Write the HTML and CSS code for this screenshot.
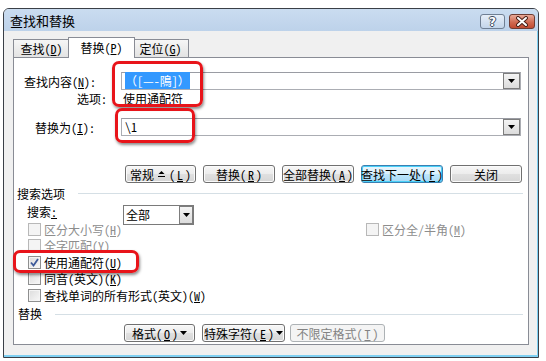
FILE: index.html
```html
<!DOCTYPE html>
<html>
<head>
    <meta charset="UTF-8">
    <title>查找和替换</title>
    <link rel="stylesheet" href="styles.css">
</head>
<body>
<div class="screen">
    <div class="window">
        <div class="titlebar">
            <span class="title">查找和替换</span>
            <span class="tbtn help">?</span>
            <span class="tbtn close">
                <svg width="14" height="11" viewBox="0 0 14 11">
                    <path d="M3 2 L11 9 M11 2 L3 9" stroke="#4a2018" stroke-width="4" stroke-linecap="round"/>
                    <path d="M3 2 L11 9 M11 2 L3 9" stroke="#fff" stroke-width="2" stroke-linecap="round"/>
                </svg>
            </span>
        </div>
        <div class="frame">
            <div class="tabs">
                <span class="tab">查找(<u>D</u>)</span>
                <span class="tab active">替换(<u>P</u>)</span>
                <span class="tab">定位(<u>G</u>)</span>
            </div>
            <div class="panel">
                <div class="row find-row">
                    <span class="lbl lbl-find">查找内容(<u>N</u>):</span>
                    <div class="combo">
                        <span class="combo-text"><span class="sel">（[—-隝]）</span></span>
                        <span class="drop"><svg width="7" height="4" viewBox="0 0 7 4"><polygon points="0,0 7,0 3.5,4" fill="#000"/></svg></span>
                    </div>
                </div>
                <div class="row opt-row">
                    <span class="lbl lbl-opt">选项:</span>
                    <span class="opt-val">使用通配符</span>
                </div>
                <div class="row repl-row">
                    <span class="lbl lbl-repl">替换为(<u>I</u>):</span>
                    <div class="combo">
                        <span class="combo-text">\1</span>
                        <span class="drop"><svg width="7" height="4" viewBox="0 0 7 4"><polygon points="0,0 7,0 3.5,4" fill="#000"/></svg></span>
                    </div>
                </div>
                <div class="row btn-row">
                    <span class="btn w71">常规 <svg class="up" width="7" height="8" viewBox="0 0 7 8"><polygon points="0.5,4 3.5,1 6.5,4" fill="#000"/><rect x="0" y="6" width="7" height="1" fill="#000"/></svg> (<u>L</u>)</span>
                    <span class="btn w72">替换(<u>R</u>)</span>
                    <span class="btn w72">全部替换(<u>A</u>)</span>
                    <span class="btn focus w82">查找下一处(<u>F</u>)</span>
                    <span class="btn w72">关闭</span>
                </div>
                <div class="row section">
                    <span class="sec-title">搜索选项</span>
                    <span class="sec-line"></span>
                </div>
                <div class="row search-row">
                    <span class="lbl lbl-search">搜索<u>:</u></span>
                    <div class="select">
                        <span class="combo-text">全部</span>
                        <span class="drop"><svg width="7" height="4" viewBox="0 0 7 4"><polygon points="0,0 7,0 3.5,4" fill="#000"/></svg></span>
                    </div>
                </div>
                <div class="checks">
                    <div class="row chk-row">
                        <span class="chk wide off"><span class="box"></span>区分大小写(<u>H</u>)</span>
                        <span class="chk off"><span class="box"></span>区分全/半角(<u>M</u>)</span>
                    </div>
                    <div class="row chk-row">
                        <span class="chk off"><span class="box"></span>全字匹配(<u>Y</u>)</span>
                    </div>
                    <div class="row chk-row">
                        <span class="chk"><span class="box"><svg width="9" height="9" viewBox="0 0 9 9"><path d="M1 4.5 L3.5 7.5 L8 1" stroke="#3d5a9a" stroke-width="1.8" fill="none"/></svg></span>使用通配符(<u>U</u>)</span>
                    </div>
                    <div class="row chk-row">
                        <span class="chk"><span class="box"></span>同音(英文)(<u>K</u>)</span>
                    </div>
                    <div class="row chk-row">
                        <span class="chk"><span class="box"></span>查找单词的所有形式(英文)(<u>W</u>)</span>
                    </div>
                </div>
                <div class="row section">
                    <span class="sec-title sec-repl">替换</span>
                    <span class="sec-line"></span>
                </div>
                <div class="row btn-row2">
                    <span class="btn w71">格式(<u>O</u>) <svg width="7" height="4" viewBox="0 0 7 4"><polygon points="0,0 7,0 3.5,4" fill="#000"/></svg></span>
                    <span class="btn w83">特殊字符(<u>E</u>) <svg width="7" height="4" viewBox="0 0 7 4"><polygon points="0,0 7,0 3.5,4" fill="#000"/></svg></span>
                    <span class="btn disabled w95">不限定格式(<u>T</u>)</span>
                </div>
            </div>
        </div>
    </div>

    <div class="mark mark1"></div>
    <div class="mark mark2"></div>
    <div class="mark mark3"></div>
</div>
</body>
</html>
```

FILE: styles.css
```css
body {
    margin: 0;
    background: #fff;
    font-family: "Noto Sans Mono CJK SC", "Noto Sans CJK SC", "DejaVu Sans Mono", monospace;
    font-size: 12px;
    color: #000;
}

.screen {
    position: relative;
    width: 546px;
    height: 361px;
    overflow: hidden;
}

.window {
    margin: 8px 0 0 3px;
    width: 536px;
    height: 350px;
    box-sizing: border-box;
    border: 1px solid #3a3f47;
    border-radius: 6px 6px 0 0;
    background: #f0f0f0;
    box-shadow: inset -1px -2px 0 #7fd0f2;
    overflow: hidden;
}

.titlebar {
    height: 22px;
    display: flex;
    align-items: flex-start;
    background: linear-gradient(#cadcf0, #bdd2ea);
}

.title {
    flex: 1;
    padding-left: 6px;
    line-height: 24px;
    font-family: "Noto Sans CJK SC", sans-serif;
    font-size: 13px;
}

.tbtn {
    margin-top: 5px;
    height: 15px;
    box-sizing: border-box;
    border-radius: 3px;
    display: flex;
    align-items: center;
    justify-content: center;
}

.help {
    width: 25px;
    margin-right: 4px;
    border: 1px solid #6f7f93;
    background: linear-gradient(#e6eef8, #c3d5ea);
    color: #fff;
    font-family: "DejaVu Sans", sans-serif;
    font-weight: bold;
    font-size: 12px;
    text-shadow: 1px 0 0 #3b4a5c, -1px 0 0 #3b4a5c, 0 1px 0 #3b4a5c, 0 -1px 0 #3b4a5c;
}

.close {
    width: 26px;
    margin-right: 3px;
    border: 1px solid #6e3c33;
    background: linear-gradient(#e9aa98, #d06a52 55%, #c24a31);
}

.frame {
    padding: 6px 9px 0 9px;
}

.tabs {
    display: flex;
    height: 20px;
    align-items: flex-end;
}

.tab {
    height: 18px;
    box-sizing: border-box;
    border: 1px solid #898c95;
    border-bottom: none;
    background: linear-gradient(#f6f6f6, #e3e3e3);
    text-align: center;
    line-height: 17px;
}

.tab:nth-child(1) {
    width: 57px;
}

.tab:nth-child(3) {
    width: 56px;
    border-left: none;
}

.tab.active {
    position: relative;
    z-index: 2;
    width: 67px;
    height: 21px;
    margin: 0 -2px -1px -2px;
    background: #fff;
    line-height: 19px;
}

.panel {
    position: relative;
    height: 288px;
    box-sizing: border-box;
    border: 1px solid #898c95;
    background: #fff;
}

.row {
    display: flex;
    align-items: center;
}

.lbl {
    flex: none;
    width: 107px;
    box-sizing: border-box;
    white-space: nowrap;
}

.lbl-find { padding-left: 10px; }
.lbl-opt { padding-left: 63px; }
.lbl-repl { padding-left: 21px; }
.lbl-search { padding-left: 13px; width: 109px; }

.find-row {
    margin-top: 14px;
    height: 18px;
}

.opt-row {
    height: 16px;
}

.opt-val {
    margin-left: 2px;
}

.repl-row {
    margin-top: 12px;
    height: 18px;
}

.combo {
    width: 400px;
    height: 18px;
    box-sizing: border-box;
    border: 1px solid #abadb3;
    border-top-color: #9a9ca3;
    display: flex;
}

.combo-text {
    flex: 1;
    padding-left: 3px;
    line-height: 16px;
    white-space: nowrap;
}

.sel {
    background: #3399ff;
    color: #fff;
}

.drop {
    width: 17px;
    height: 16px;
    box-sizing: border-box;
    border: 1px solid #7d7d7d;
    background: linear-gradient(#f4f4f4, #dcdcdc);
    display: flex;
    align-items: center;
    justify-content: center;
}

.btn-row {
    margin-top: 29px;
    height: 18px;
    padding-left: 111px;
    gap: 7px;
}

.btn {
    height: 18px;
    box-sizing: border-box;
    border: 1px solid #707070;
    border-radius: 3px;
    background: linear-gradient(#f7f7f7, #ececec 50%, #e0e0e0 51%, #d6d6d6);
    box-shadow: inset 0 0 0 1px #fbfbfb;
    display: flex;
    align-items: center;
    justify-content: center;
    gap: 2px;
    white-space: nowrap;
}

.btn .up {
    margin: 0 2px;
}

.btn.focus {
    border-color: #3c7fb1;
    background: linear-gradient(#eaf6fd, #d9f0fc 50%, #bee6fd 51%, #a7d9f5);
    box-shadow: inset 0 0 0 1px #48d0f8;
}

.btn.disabled {
    border-color: #adb2b5;
    background: #f4f4f4;
    box-shadow: none;
    color: #838383;
}

.w71 { width: 71px; }
.w72 { width: 72px; }
.w82 { width: 82px; }
.w83 { width: 83px; }
.w95 { width: 95px; }

.section {
    height: 16px;
    margin-top: 2px;
}

.sec-title {
    padding-left: 3px;
}

.sec-repl {
    padding-left: 4px;
}

.sec-line {
    flex: 1;
    height: 1px;
    background: #d5dfe5;
    margin: 1px 5px 0 13px;
}

.search-row {
    margin-top: 4px;
    height: 20px;
    align-items: flex-start;
}

.lbl-search {
    margin-top: -1px;
    line-height: 16px;
}

.select {
    width: 71px;
    height: 20px;
    box-sizing: border-box;
    border: 1px solid #7a7a7a;
    display: flex;
    align-items: center;
}

.select .combo-text {
    padding-left: 2px;
}

.select .drop {
    width: 14px;
    height: 18px;
}

.checks {
    margin-top: -4px;
}

.chk-row {
    height: 16.5px;
    padding-left: 14px;
}

.chk {
    display: flex;
    align-items: center;
    white-space: nowrap;
}

.chk.wide {
    width: 338px;
}

.box {
    width: 13px;
    height: 13px;
    box-sizing: border-box;
    margin-right: 3px;
    border: 1px solid #8e8f8f;
    background: linear-gradient(135deg, #dcdcdc, #f8f8f8);
    box-shadow: inset 0 0 0 1px #f4f4f4;
    display: flex;
    align-items: center;
    justify-content: center;
}

.chk.off {
    color: #8d8d8d;
}

.chk.off .box {
    border-color: #b8b8b8;
    background: #f4f4f4;
}

.btn-row2 {
    margin-top: 2.5px;
    height: 18px;
    padding-left: 110px;
}

.btn-row2 .w71 { margin-right: 7px; }
.btn-row2 .w83 { margin-right: 5px; }

.mark {
    position: absolute;
    box-sizing: border-box;
    border: 3px solid #e8141a;
    border-radius: 7px;
    box-shadow: 1px 2px 3px rgba(0, 0, 0, 0.45);
}

.mark1 { left: 112px; top: 61px; width: 91px; height: 46px; }
.mark2 { left: 115px; top: 108px; width: 80px; height: 35px; }
.mark3 { left: 13px; top: 250px; width: 126px; height: 23px; }
```
